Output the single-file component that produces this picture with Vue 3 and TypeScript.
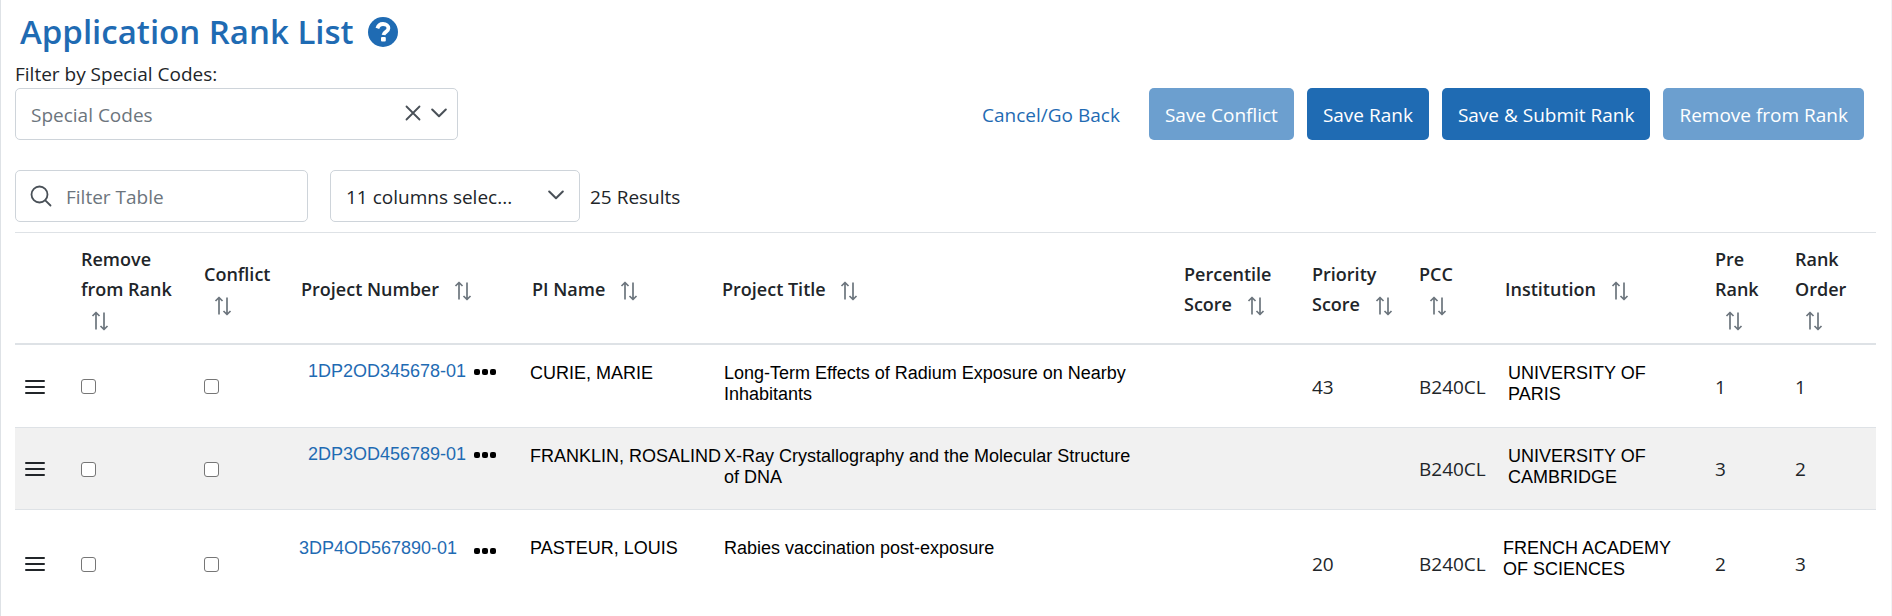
<script setup lang="ts">
import { ref } from 'vue'

interface Column {
  key: string
  label: string
}

interface Application {
  id: string
  pi: string
  title: string
  percentile: string
  priority: string
  pcc: string
  institution: string
  preRank: number
  rankOrder: number
  roomy?: boolean
  remove: boolean
  conflict: boolean
}

const columns: Column[] = [
  { key: 'remove', label: 'Remove from Rank' },
  { key: 'conflict', label: 'Conflict' },
  { key: 'number', label: 'Project Number' },
  { key: 'pi', label: 'PI Name' },
  { key: 'title', label: 'Project Title' },
  { key: 'percentile', label: 'Percentile Score' },
  { key: 'priority', label: 'Priority Score' },
  { key: 'pcc', label: 'PCC' },
  { key: 'institution', label: 'Institution' },
  { key: 'pre', label: 'Pre Rank' },
  { key: 'order', label: 'Rank Order' },
]

const applications = ref<Application[]>([
  {
    id: '1DP2OD345678-01',
    pi: 'CURIE, MARIE',
    title: 'Long-Term Effects of Radium Exposure on Nearby Inhabitants',
    percentile: '',
    priority: '43',
    pcc: 'B240CL',
    institution: 'UNIVERSITY OF PARIS',
    preRank: 1,
    rankOrder: 1,
    remove: false,
    conflict: false,
  },
  {
    id: '2DP3OD456789-01',
    pi: 'FRANKLIN, ROSALIND',
    title: 'X-Ray Crystallography and the Molecular Structure of DNA',
    percentile: '',
    priority: '',
    pcc: 'B240CL',
    institution: 'UNIVERSITY OF CAMBRIDGE',
    preRank: 3,
    rankOrder: 2,
    remove: false,
    conflict: false,
  },
  {
    id: '3DP4OD567890-01',
    pi: 'PASTEUR, LOUIS',
    title: 'Rabies vaccination post-exposure',
    percentile: '',
    priority: '20',
    pcc: 'B240CL',
    institution: 'FRENCH ACADEMY OF SCIENCES',
    preRank: 2,
    rankOrder: 3,
    roomy: true,
    remove: false,
    conflict: false,
  },
])

const specialCode = ref('')
const filterText = ref('')
</script>

<template>
  <main class="page">
    <h1 class="title">
      Application Rank List
      <button class="icon-button help" type="button" aria-label="Help">
        <svg width="30" height="30" viewBox="0 0 30 30" aria-hidden="true">
          <circle cx="15" cy="15" r="15" fill="#1f6bb3" />
          <path d="M9.4 11.4C10.300 8.300 12.300 7 15 7c3.200 0 5.400 1.800 5.400 4.300 0 3.700-4.500 3.400-4.900 6.700" fill="none" stroke="#fff" stroke-width="3.800" />
          <rect x="13" y="20" width="4.800" height="4.400" rx="1" fill="#fff" />
        </svg>
      </button>
    </h1>

    <label class="codes-label" for="codes">Filter by Special Codes:</label>
    <div class="actions-row">
      <div class="select-box codes">
        <select id="codes" v-model="specialCode" class="placeholder">
          <option value="">Special Codes</option>
        </select>
        <div class="select-icons">
          <button class="icon-button clear" type="button" aria-label="Clear special codes" @click="specialCode = ''">
            <svg width="16" height="16" viewBox="0 0 16 16" aria-hidden="true">
              <path d="M1.5 1.5l13 13M14.5 1.5l-13 13" fill="none" stroke="#495057" stroke-width="1.8" stroke-linecap="round" />
            </svg>
          </button>
          <svg width="16" height="16" viewBox="0 0 16 16" aria-hidden="true">
            <path d="M1.2 4.5L8 11.3l6.800-6.800" fill="none" stroke="#495057" stroke-width="2" stroke-linecap="round" stroke-linejoin="round" />
          </svg>
        </div>
      </div>
      <div class="actions">
        <a class="cancel" href="#">Cancel/Go Back</a>
        <button class="btn" type="button" disabled>Save Conflict</button>
        <button class="btn" type="button">Save Rank</button>
        <button class="btn" type="button">Save &amp; Submit Rank</button>
        <button class="btn" type="button" disabled>Remove from Rank</button>
      </div>
    </div>

    <div class="toolbar">
      <label class="search">
        <svg width="22" height="22" viewBox="0 0 22 22" aria-hidden="true">
          <circle cx="9.500" cy="9.500" r="8" fill="none" stroke="#495057" stroke-width="1.800" />
          <path d="M15.300 15.300l5.200 5.200" fill="none" stroke="#495057" stroke-width="1.800" stroke-linecap="round" />
        </svg>
        <input v-model="filterText" type="text" placeholder="Filter Table" aria-label="Filter Table" />
      </label>
      <div class="select-box columns">
        <select aria-label="Visible columns">
          <option>11 columns selec...</option>
        </select>
        <div class="select-icons">
          <svg width="16" height="16" viewBox="0 0 16 16" aria-hidden="true">
            <path d="M1.2 4.500L8 11.300l6.800-6.800" fill="none" stroke="#495057" stroke-width="2" stroke-linecap="round" stroke-linejoin="round" />
          </svg>
        </div>
      </div>
      <span class="results">25 Results</span>
    </div>

    <table class="rank-table">
      <colgroup>
        <col class="col-drag" />
        <col v-for="column in columns" :key="column.key" :class="'col-' + column.key" />
      </colgroup>
      <thead>
        <tr>
          <td></td>
          <th v-for="column in columns" :key="column.key" scope="col">
            {{ column.label }}
            <button class="icon-button sort" type="button" :aria-label="'Sort by ' + column.label">
              <svg width="18" height="20" viewBox="0 0 18 20" aria-hidden="true">
                <path d="M5 18.500V2M1.500 5L5 1.500 8.500 5M13 1.500V18M9.500 15l3.500 3.500 3.500-3.500" fill="none" stroke="#6c757d" stroke-width="1.700" stroke-linejoin="round" />
              </svg>
            </button>
          </th>
        </tr>
      </thead>
      <tbody>
        <tr v-for="app in applications" :key="app.id" :class="{ roomy: app.roomy }">
          <td>
            <button class="icon-button drag" type="button" :aria-label="'Reorder ' + app.id">
              <svg width="20" height="14" viewBox="0 0 20 14" aria-hidden="true">
                <path d="M1 1h18M1 7h18M1 13h18" stroke="#212529" stroke-width="2" stroke-linecap="round" />
              </svg>
            </button>
          </td>
          <td><input v-model="app.remove" class="tick" type="checkbox" :aria-label="'Remove ' + app.id" /></td>
          <td><input v-model="app.conflict" class="tick" type="checkbox" :aria-label="'Conflict on ' + app.id" /></td>
          <td class="text number">
            <div class="number-line">
              <a href="#">{{ app.id }}</a>
              <button class="icon-button" type="button" :aria-label="'More for ' + app.id">
                <svg width="22" height="16" viewBox="0 0 22 16" aria-hidden="true">
                  <rect x="0" y="5" width="6" height="6" rx="2" />
                  <rect x="8" y="5" width="6" height="6" rx="2" />
                  <rect x="16" y="5" width="6" height="6" rx="2" />
                </svg>
              </button>
            </div>
          </td>
          <td class="text pi">{{ app.pi }}</td>
          <td class="text project">{{ app.title }}</td>
          <td>{{ app.percentile }}</td>
          <td>{{ app.priority }}</td>
          <td>{{ app.pcc }}</td>
          <td class="text institution">{{ app.institution }}</td>
          <td>{{ app.preRank }}</td>
          <td>{{ app.rankOrder }}</td>
        </tr>
      </tbody>
    </table>
  </main>
</template>

<style>
body {
  margin: 0;
  background: #fff;
}
</style>

<style scoped>
.page {
  box-sizing: border-box;
  min-height: 100vh;
  padding: 10px 15px 0 14px;
  border-left: 1px solid #dee2e6;
  border-right: 1px solid #f1f3f5;
  color: #212529;
  font-family: "Open Sans", "Noto Sans", sans-serif;
  font-size: 19px;
  line-height: 28px;
}

.title {
  display: flex;
  align-items: center;
  gap: 14px;
  margin: 0 0 6px 5px;
  color: #1f6bb3;
  font-size: 33px;
  font-weight: 600;
  line-height: 44px;
}

.icon-button {
  padding: 0;
  border: 0;
  background: none;
  cursor: pointer;
}

.icon-button svg {
  display: block;
}

.codes-label {
  display: block;
}

.actions-row {
  display: flex;
  justify-content: space-between;
  align-items: center;
  margin-bottom: 30px;
}

.select-box {
  position: relative;
  box-sizing: border-box;
  height: 52px;
  border: 1px solid #ced4da;
  border-radius: 5px;
}

.select-box select {
  width: 100%;
  height: 100%;
  padding: 2px 15px 0;
  border: 0;
  border-radius: 5px;
  background: none;
  color: inherit;
  font: inherit;
  appearance: none;
}

.select-box select.placeholder {
  color: #6c757d;
}

.codes {
  width: 443px;
}

.columns {
  width: 250px;
  margin: 0 10px 0 22px;
}

.select-icons {
  position: absolute;
  top: 0;
  right: 10px;
  height: 48px;
  display: flex;
  align-items: center;
  gap: 10px;
  pointer-events: none;
}

.columns .select-icons {
  right: 15px;
}

.clear {
  pointer-events: auto;
}

.actions {
  display: flex;
  align-items: center;
  gap: 13px;
  padding-right: 12px;
}

.cancel {
  margin-right: 16px;
  padding-top: 2px;
}

a {
  color: #1f6bb3;
  text-decoration: none;
}

.btn {
  height: 52px;
  padding: 2px 16px 0;
  border: 0;
  border-radius: 5px;
  background: #1f6bb3;
  color: #fff;
  font: inherit;
}

.btn:disabled {
  background: #6c9fcf;
}

.toolbar {
  display: flex;
  align-items: center;
  margin-bottom: 10px;
}

.results {
  padding-top: 2px;
}

.search {
  box-sizing: border-box;
  display: flex;
  align-items: center;
  gap: 14px;
  width: 293px;
  height: 52px;
  padding: 0 14px;
  border: 1px solid #ced4da;
  border-radius: 5px;
}

.search input {
  flex: 1;
  min-width: 0;
  padding: 2px 0 0;
  border: 0;
  outline: 0;
  background: none;
  color: inherit;
  font: inherit;
}

.search input::placeholder {
  color: #6c757d;
  opacity: 1;
}

.rank-table {
  width: 100%;
  table-layout: fixed;
  border-spacing: 0;
  border-top: 1px solid #dee2e6;
}

.col-drag { width: 56px; }
.col-remove { width: 123px; }
.col-conflict { width: 97px; }
.col-number { width: 231px; }
.col-pi { width: 190px; }
.col-percentile { width: 128px; }
.col-priority { width: 107px; }
.col-pcc { width: 86px; }
.col-institution { width: 210px; }
.col-pre { width: 80px; }
.col-order { width: 91px; }

thead th,
thead td {
  padding: 11px 10px 9px;
  border-bottom: 2px solid #dee2e6;
  font-size: 18px;
  font-weight: 600;
  line-height: 30px;
  text-align: left;
}

.sort {
  display: inline-block;
  margin-left: 10px;
  vertical-align: -5px;
}

tbody td {
  box-sizing: border-box;
  height: 82px;
  padding: 1px 10px 0;
}

tbody tr + tr td {
  border-top: 1px solid #dee2e6;
}

tbody tr:nth-child(even) {
  background: #f1f1f1;
}

tbody tr.roomy td {
  height: 107px;
  padding-top: 2px;
}

.drag,
.tick {
  display: block;
}

.tick {
  box-sizing: border-box;
  width: 15px;
  height: 15px;
  margin: 0;
  border: 1px solid #767676;
  border-radius: 3px;
  background: #fff;
  appearance: none;
}

.tick:checked {
  background: #1f6bb3;
}

tbody td.text {
  padding-top: 18px;
  color: #000;
  font-family: "Liberation Sans", Arial, sans-serif;
  font-size: 18px;
  line-height: 21px;
  vertical-align: top;
}

tbody tr.roomy td.text {
  padding-top: 28px;
}

tbody td.number {
  padding: 16px 26px 0 0;
  white-space: nowrap;
}

.number-line {
  display: flex;
  justify-content: flex-end;
  align-items: center;
  gap: 8px;
}

.roomy .number-line {
  align-items: flex-end;
  gap: 17px;
}

tbody td.pi {
  padding-left: 8px;
  padding-right: 0;
  white-space: nowrap;
}

tbody td.project {
  padding-left: 12px;
  padding-right: 40px;
}

tbody td.institution {
  padding-left: 13px;
  padding-right: 20px;
}

tbody tr.roomy td.institution {
  padding-left: 8px;
}
</style>
